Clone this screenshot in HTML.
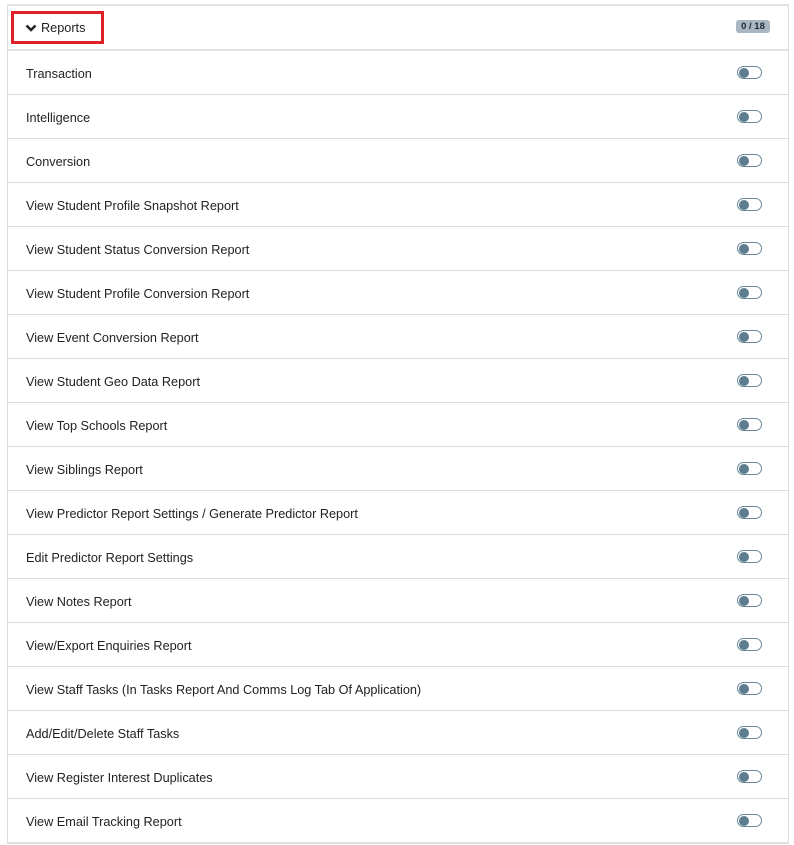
<!DOCTYPE html>
<html><head><style>
body{margin:0;background:#fff;font-family:"Liberation Sans",sans-serif;width:794px;height:845px;overflow:hidden;position:relative}
.wrap{position:absolute;left:7px;top:4px;width:780px;border-left:1px solid #ddd;border-right:1px solid #ddd;border-top:2px solid #e2e2e2}
.hdr{height:43px;border-bottom:2px solid #e2e2e2;position:relative}
.red{position:absolute;left:3px;top:5px;width:87px;height:27px;border:3px solid #e02027;box-sizing:content-box}
.red span{position:absolute;left:27px;top:7px;font-size:12.7px;color:#222}
.red svg{position:absolute;left:11px;top:10px}
.badge{position:absolute;left:728px;top:14px;width:34px;height:13px;background:#a8b7c1;border-radius:3px;font-size:9.5px;font-weight:bold;color:#1d2a33;text-align:center;line-height:13px}
.row{height:43px;border-bottom:1px solid #dcdcdc;position:relative}
.row span{position:absolute;left:18px;top:16px;font-size:12.7px;color:#222}
.tg{position:absolute;left:729px;top:15px;width:23px;height:11px;border:1.5px solid #6a8899;border-radius:8px}
.tg:after{content:"";position:absolute;left:1px;top:0.5px;width:10px;height:10px;border-radius:50%;background:#5e7d8f}
.last{border-bottom:2px solid #e2e2e2}
</style></head><body>
<div class="wrap">
<div class="hdr"><div class="red"><svg width="12" height="9" viewBox="0 0 12 9"><path d="M1.5 1.5 L6 6 L10.5 1.5" stroke="#222" stroke-width="2.5" fill="none"/></svg><span>Reports</span></div><div class="badge">0 / 18</div></div>
<div class="row"><span>Transaction</span><div class="tg"></div></div>
<div class="row"><span>Intelligence</span><div class="tg"></div></div>
<div class="row"><span>Conversion</span><div class="tg"></div></div>
<div class="row"><span>View Student Profile Snapshot Report</span><div class="tg"></div></div>
<div class="row"><span>View Student Status Conversion Report</span><div class="tg"></div></div>
<div class="row"><span>View Student Profile Conversion Report</span><div class="tg"></div></div>
<div class="row"><span>View Event Conversion Report</span><div class="tg"></div></div>
<div class="row"><span>View Student Geo Data Report</span><div class="tg"></div></div>
<div class="row"><span>View Top Schools Report</span><div class="tg"></div></div>
<div class="row"><span>View Siblings Report</span><div class="tg"></div></div>
<div class="row"><span>View Predictor Report Settings / Generate Predictor Report</span><div class="tg"></div></div>
<div class="row"><span>Edit Predictor Report Settings</span><div class="tg"></div></div>
<div class="row"><span>View Notes Report</span><div class="tg"></div></div>
<div class="row"><span>View/Export Enquiries Report</span><div class="tg"></div></div>
<div class="row"><span>View Staff Tasks (In Tasks Report And Comms Log Tab Of Application)</span><div class="tg"></div></div>
<div class="row"><span>Add/Edit/Delete Staff Tasks</span><div class="tg"></div></div>
<div class="row"><span>View Register Interest Duplicates</span><div class="tg"></div></div>
<div class="row last"><span>View Email Tracking Report</span><div class="tg"></div></div>
</div>
</body></html>
